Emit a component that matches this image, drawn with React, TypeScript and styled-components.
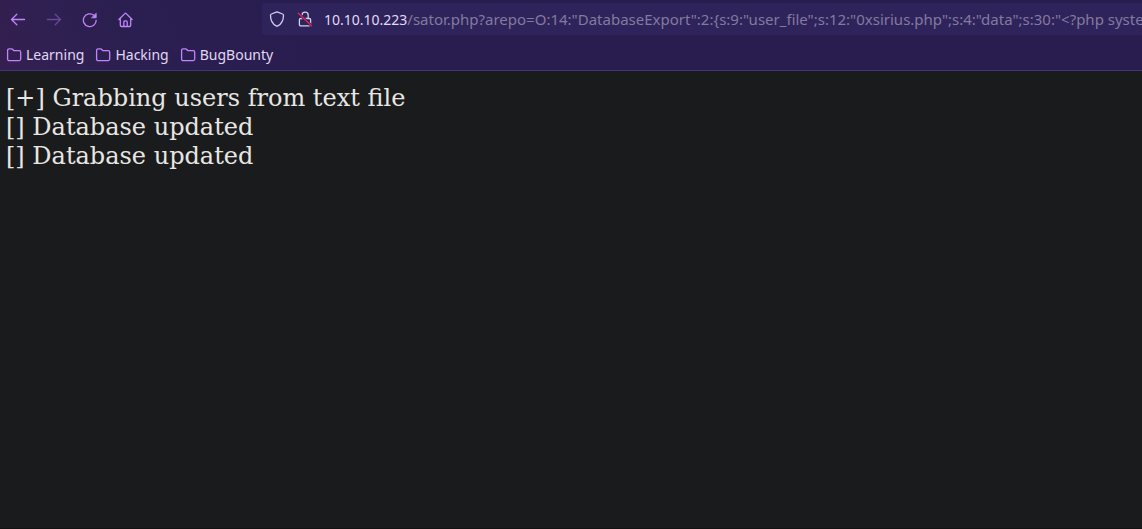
import React from "react";
import styled, { createGlobalStyle } from "styled-components";

const GlobalStyle = createGlobalStyle`
  * {
    box-sizing: border-box;
  }

  body {
    margin: 0;
    background: #1a1b1c;
  }
`;

const Browser = styled.div`
  display: flex;
  flex-direction: column;
  min-height: 100vh;
  overflow: hidden;
  font-family: "Noto Sans", sans-serif;
  border-bottom: 1px solid #121213;
`;

const Chrome = styled.header`
  border-bottom: 1px solid #41357d;
  background: linear-gradient(65deg, #351f50 0, #2f2051 60px, #2a1f50 140px, #281d4e 300px);
`;

const NavigationBar = styled.div`
  display: flex;
  align-items: center;
  height: 38px;
  padding-left: 8px;
`;

const NavigationButtons = styled.nav`
  display: flex;
  gap: 16px;
  margin-right: 126px;
  padding-top: 2px;
`;

const IconButton = styled.button`
  display: flex;
  align-items: center;
  justify-content: center;
  width: 20px;
  height: 20px;
  padding: 0;
  border: 0;
  background: none;
  color: #c084fc;

  &:disabled {
    color: #6a4695;
  }
`;

const AddressBar = styled.form`
  display: flex;
  flex: 1;
  align-items: center;
  min-width: 0;
  height: 32px;
  padding-left: 6px;
  border-radius: 4px 0 0 4px;
  background: #2e245b;
  font-size: 15px;
`;

const SiteButton = styled(IconButton)`
  width: 18px;
  height: 18px;
  margin-right: 10px;
  color: #d5ccef;
`;

const Host = styled.label`
  color: #e2d9f7;
  font-size: 14px;
`;

const PathInput = styled.input`
  flex: 1;
  min-width: 0;
  height: 24px;
  padding: 0;
  border: 0;
  outline: 0;
  background: none;
  color: #84799f;
  font: inherit;
`;

const Bookmarks = styled.nav`
  display: flex;
  align-items: center;
  gap: 11px;
  height: 32px;
  padding: 2px 0 0 6px;
`;

const Bookmark = styled.a`
  display: flex;
  align-items: center;
  gap: 4px;
  color: #e0d7f5;
  font-size: 14px;
  line-height: 20px;
  text-decoration: none;

  svg {
    color: #c084fc;
  }
`;

const Output = styled.main`
  flex: 1;
  padding: 13px 6px;
  color: #e8e6e3;
  font-family: "DejaVu Serif", serif;
  font-size: 24px;
  line-height: 29px;
`;

const Line = styled.div``;

const Icon = ({ children }: { children: React.ReactNode }) => (
  <svg
    width="16"
    height="16"
    viewBox="0 0 16 16"
    fill="none"
    stroke="currentColor"
    strokeWidth="1.3"
    strokeLinecap="round"
    strokeLinejoin="round"
    aria-hidden="true"
  >
    {children}
  </svg>
);

const FolderIcon = () => (
  <Icon>
    <path d="M1.6 3.4c0-.9.6-1.5 1.5-1.5h2.5c.5 0 .9.2 1.2.6l.9 1.2h5.5c.9 0 1.500.6 1.500 1.500v6.900c0 .9-.6 1.500-1.500 1.500H3.100c-.9 0-1.500-.6-1.500-1.500z" />
  </Icon>
);

const folders = ["Learning", "Hacking", "BugBounty"];
const messages = [
  "[+] Grabbing users from text file",
  "[] Database updated",
  "[] Database updated",
];
const path =
  '/sator.php?arepo=O:14:"DatabaseExport":2:{s:9:"user_file";s:12:"0xsirius.php";s:4:"data";s:30:"<?php system($_GET["cmd"]); ?>";}';

export default function App() {
  return (
    <>
      <GlobalStyle />
      <Browser>
        <Chrome>
          <NavigationBar>
            <NavigationButtons aria-label="Navigation">
              <IconButton type="button" aria-label="Back">
                <Icon>
                  <path d="M14.5 7.500H1.700M6.800 2.200 1.500 7.500l5.300 5.300" />
                </Icon>
              </IconButton>
              <IconButton type="button" aria-label="Forward" disabled>
                <Icon>
                  <path d="M1.500 7.500h12.800M9.200 2.200 14.500 7.500l-5.300 5.300" />
                </Icon>
              </IconButton>
              <IconButton type="button" aria-label="Reload">
                <Icon>
                  <path d="M14.200 8.300A6.400 6.400 0 1 1 11.900 3.300" />
                  <path d="M14.200 1.600v4.200H9.900z" fill="currentColor" strokeWidth="0.8" />
                </Icon>
              </IconButton>
              <IconButton type="button" aria-label="Home">
                <Icon>
                  <path d="M.9 7.500 6.800 1.600a1 1 0 0 1 1.400 0l5.900 5.900M2.300 6.500v6.700c0 .8.5 1.300 1.300 1.300h7.800c.8 0 1.300-.5 1.300-1.300V6.500M5.800 14.400V9.900c0-.6.4-1 1-1h1.400c.6 0 1 .4 1 1v4.500" />
                </Icon>
              </IconButton>
            </NavigationButtons>
            <AddressBar>
              <SiteButton type="button" aria-label="Tracking protection">
                <Icon>
                  <path d="M8 .9 13.600 3c.6.2.9.6.9 1.200 0 5-1.800 8.600-5.700 10.700-.5.3-1.100.3-1.600 0C3.300 12.800 1.500 9.200 1.500 4.200c0-.6.3-1 .9-1.200z" />
                </Icon>
              </SiteButton>
              <SiteButton type="button" aria-label="Connection is not secure">
                <Icon>
                  <path d="M5 7.500V4.200a3.100 3.100 0 0 1 6.200 0v3.300M3.700 7.500h8.600c.8 0 1.300.5 1.300 1.300v4.700c0 .8-.5 1.300-1.300 1.300H3.700c-.8 0-1.300-.5-1.300-1.300V8.800c0-.8.5-1.300 1.300-1.300z" />
                  <path d="m1.300 2.300 13.200 12.500" stroke="#2e245b" strokeWidth="2.800" />
                  <path d="m1.300 2.300 13.200 12.500" stroke="#e22850" />
                </Icon>
              </SiteButton>
              <Host htmlFor="address">10.10.10.223</Host>
              <PathInput id="address" defaultValue={path} spellCheck={false} />
            </AddressBar>
          </NavigationBar>
          <Bookmarks aria-label="Bookmarks">
            {folders.map((name) => (
              <Bookmark href="#" key={name}>
                <FolderIcon />
                {name}
              </Bookmark>
            ))}
          </Bookmarks>
        </Chrome>
        <Output>
          {messages.map((message, index) => (
            <Line key={index}>{message}</Line>
          ))}
        </Output>
      </Browser>
    </>
  );
}
